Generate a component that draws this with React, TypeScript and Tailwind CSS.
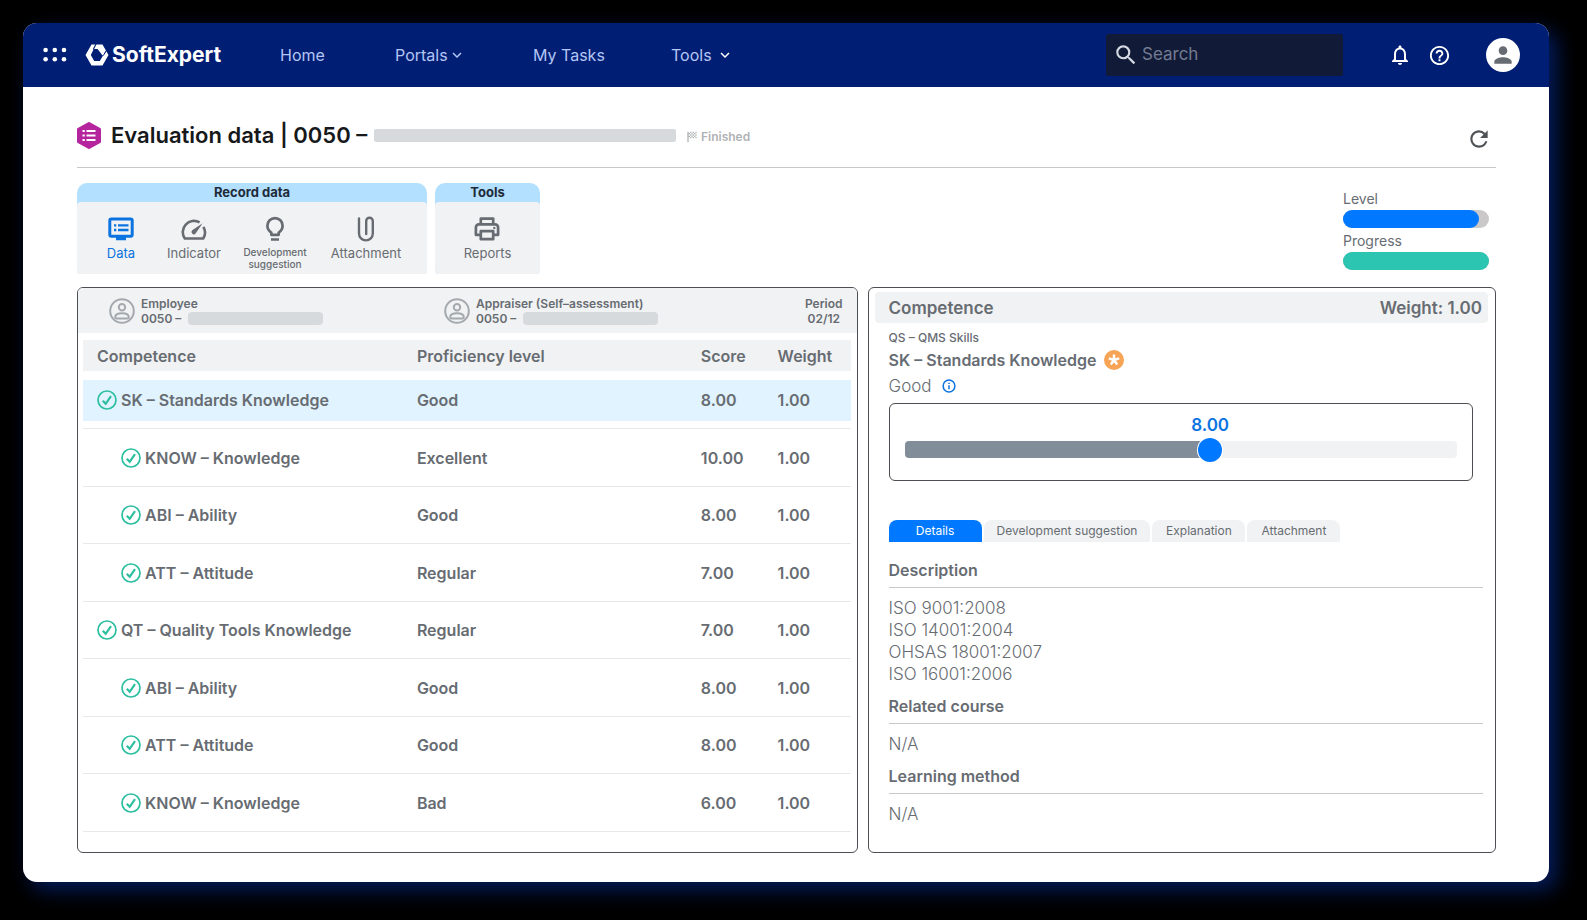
import React, { useState } from 'react';
import {
  MdHelpOutline,
  MdKeyboardArrowDown,
  MdNotificationsNone,
  MdPerson,
  MdRefresh,
  MdSearch,
  MdSportsScore,
} from 'react-icons/md';

const competences = [
  { name: 'SK – Standards Knowledge', level: 'Good', score: '8.00', weight: '1.00', child: false, selected: true },
  { name: 'KNOW – Knowledge', level: 'Excellent', score: '10.00', weight: '1.00', child: true },
  { name: 'ABI – Ability', level: 'Good', score: '8.00', weight: '1.00', child: true },
  { name: 'ATT – Attitude', level: 'Regular', score: '7.00', weight: '1.00', child: true },
  { name: 'QT – Quality Tools Knowledge', level: 'Regular', score: '7.00', weight: '1.00', child: false },
  { name: 'ABI – Ability', level: 'Good', score: '8.00', weight: '1.00', child: true },
  { name: 'ATT – Attitude', level: 'Good', score: '8.00', weight: '1.00', child: true },
  { name: 'KNOW – Knowledge', level: 'Bad', score: '6.00', weight: '1.00', child: true },
];

const tabs = ['Details', 'Development suggestion', 'Explanation', 'Attachment'];

const AppsIcon = () => (
  <svg width="24" height="16" viewBox="0 0 24 16" fill="currentColor" aria-hidden="true">
    {[2.6, 11.8, 21].map((x) => (
      <g key={x}>
        <circle cx={x} cy="3" r="2.3" />
        <circle cx={x} cy="12.2" r="2.3" />
      </g>
    ))}
  </svg>
);

const LogoMark = () => (
  <svg width="24" height="22" viewBox="0 0 24 22" aria-hidden="true">
    <path
      d="M6.500 0.500h11L23.500 11l-6 10.500h-11L0.500 11z M8.800 5L5.800 11l3.400 6h5.600L18.400 11l-3.400-6z"
      fill="#fff"
      fillRule="evenodd"
    />
    <path d="M11 0L8.300 5.500M21.800 6l-3.600 5.500" stroke="#001f74" strokeWidth="1.100" fill="none" />
    <path d="M12.200 4.500h3.800l3 5.300-1.500 1.600z" fill="#fff" />
  </svg>
);

const EvaluationIcon = () => (
  <svg width="24" height="27" viewBox="0 0 24 27" aria-hidden="true">
    <path d="M12 1.500L22.500 7.300v12.400L12 25.500 1.500 19.700V7.300z" fill="#b5259d" stroke="#b5259d" strokeWidth="3" strokeLinejoin="round" />
    <path d="M9.500 9h9M9.500 13.500h9M9.500 18h9M5.500 9h2.300M5.500 13.500h2.300M5.500 18h2.300" stroke="#fff" strokeWidth="2.200" />
  </svg>
);

const DataIcon = () => (
  <svg width="26" height="26" viewBox="0 0 26 26" fill="none" stroke="currentColor" aria-hidden="true">
    <rect x="1.800" y="3" width="22.400" height="17.200" rx="1.500" strokeWidth="3" />
    <path d="M8 22.500h10" strokeWidth="3.600" />
    <path d="M6 9.300h2.300M10 9.300h10.500M6 14h2.300M10 14h10.500" strokeWidth="2.300" />
  </svg>
);

const GaugeIcon = () => (
  <svg width="26" height="26" viewBox="0 0 26 26" fill="none" stroke="currentColor" strokeWidth="2.600" strokeLinejoin="round" aria-hidden="true">
    <path d="M18.600 6.400A11.200 11.200 0 0 0 3.800 22.500h18.400a11.200 11.200 0 0 0 .2-11.700" />
    <path d="M21.600 7.200l-7 10.400a2.200 2.200 0 0 1-3.400-3.300z" fill="currentColor" stroke="none" />
  </svg>
);

const BulbIcon = () => (
  <svg width="26" height="26" viewBox="0 0 26 26" fill="none" stroke="currentColor" strokeWidth="2.700" aria-hidden="true">
    <path d="M9.300 18.800v-2.200C7 15 5.400 12.700 5.400 9.700a7.600 7.600 0 0 1 15.200 0c0 3-1.600 5.300-3.900 6.900v2.200z" strokeLinejoin="round" />
    <path d="M9 23.500h8" />
  </svg>
);

const ClipIcon = () => (
  <svg width="26" height="26" viewBox="0 0 26 26" fill="none" stroke="currentColor" strokeWidth="2.400" strokeLinecap="round" aria-hidden="true">
    <path d="M6 2.500v15a6.900 6.900 0 0 0 13.800 0V5a3.300 3.300 0 0 0-6.600 0v13" />
  </svg>
);

const PrinterIcon = () => (
  <svg width="26" height="26" viewBox="0 0 26 26" fill="none" stroke="currentColor" strokeWidth="2.700" strokeLinejoin="round" aria-hidden="true">
    <path d="M6.800 8.300V2.700h12.400v5.600" />
    <path d="M6.800 18.800H1.900v-7.500a3 3 0 0 1 3-3h16.200a3 3 0 0 1 3 3v7.500h-4.900" />
    <path d="M6.800 15.200h12.400v8H6.800z" />
    <circle cx="20.300" cy="12" r="0.500" strokeWidth="1.400" />
  </svg>
);

const UserCircle = () => (
  <svg width="26" height="26" viewBox="0 0 26 26" fill="none" stroke="#a3a9ae" strokeWidth="2" className="shrink-0" aria-hidden="true">
    <circle cx="13" cy="13" r="11.800" />
    <circle cx="13" cy="9.300" r="3.200" />
    <path d="M6.200 19.200c0-2.500 3-4 6.800-4s6.800 1.500 6.800 4c0 .8-.6 1.200-1.300 1.200h-11c-.7 0-1.300-.4-1.300-1.200z" />
  </svg>
);

const CheckIcon = () => (
  <svg width="20" height="20" viewBox="0 0 20 20" fill="none" stroke="#2bbfa0" strokeWidth="1.700" className="shrink-0" aria-hidden="true">
    <circle cx="10" cy="10" r="9" />
    <path d="M5.800 10.800l2.900 3L14 6.200" strokeWidth="2.200" />
  </svg>
);

const StarBadge = () => (
  <svg width="20" height="20" viewBox="0 0 20 20" aria-hidden="true">
    <circle cx="10" cy="10" r="10" fill="#f7a456" />
    <path d="M10 10V4.500M10 10l5.200-1.700M10 10l3.200 4.500M10 10l-3.200 4.500M10 10L4.800 8.300" stroke="#fff" strokeWidth="2.400" />
  </svg>
);

const InfoIcon = () => (
  <svg width="14" height="14" viewBox="0 0 14 14" fill="none" stroke="#0b74e0" strokeWidth="1.500" aria-hidden="true">
    <circle cx="7" cy="7" r="5.900" />
    <path d="M7 6.200v4M7 3.700v1.400" />
  </svg>
);

const ToolButton = ({ icon, label, active = false, small = false }: { icon: React.ReactNode; label: string; active?: boolean; small?: boolean }) => (
  <button
    className={`flex flex-col items-center ${active ? 'text-[#0b74e0]' : 'text-[#676c72]'} ${small ? 'px-2 text-[10px] leading-3 font-medium' : 'text-[13px] leading-5'}`}
  >
    {icon}
    <span className={small ? 'mt-1' : 'mt-px'}>{label}</span>
  </button>
);

const Person = ({ role }: { role: string }) => (
  <div className="flex items-center gap-[6px]">
    <UserCircle />
    <div>
      <div>{role}</div>
      <div className="flex items-center gap-1">
        <span className="w-[43px] whitespace-nowrap">0050 –</span>
        <span className="h-[13px] w-[135px] rounded-sm bg-[#d7dadc]" />
      </div>
    </div>
  </div>
);

const Meter = ({ label, value, color }: { label: string; value: number; color: string }) => (
  <div>
    <div className="text-[14px] leading-[22px] text-[#676c72]">{label}</div>
    <div className="h-[18px] rounded-full bg-[#cac8c9]" role="progressbar" aria-label={label} aria-valuenow={value}>
      <div className={`h-full rounded-full ${color}`} style={{ width: `${value}%` }} />
    </div>
  </div>
);

const Section = ({ title, lines }: { title: string; lines: string[] }) => (
  <section className="mb-2">
    <h3 className="border-b border-[#c6c8ca] pb-[3px] text-[16px] leading-[27px] font-semibold">{title}</h3>
    <div className="pt-[9px] text-[17px] leading-[22px] font-light">
      {lines.map((line) => (
        <p key={line}>{line}</p>
      ))}
    </div>
  </section>
);

const App = () => {
  const [activeTab, setActiveTab] = useState('Details');
  const [score, setScore] = useState(8);
  const ratio = (score - 3) / 9;
  const thumb = `calc(12px + (100% - 24px) * ${ratio})`;

  return (
    <div className="flex min-h-screen bg-black pt-[23px] pr-[38px] pb-[38px] pl-[23px] font-['Inter','Liberation_Sans',sans-serif] text-[#676c72]">
      <div className="flex flex-1 flex-col overflow-hidden rounded-[14px] bg-white shadow-[8px_8px_20px_#041c5c]">
        <header className="flex h-16 items-center bg-[#001f74] pr-[29px] pl-5 text-white">
          <button aria-label="Applications">
            <AppsIcon />
          </button>
          <a href="#" className="ml-[18px] flex w-[195px] items-center gap-[3px] text-[21px] leading-6 font-bold">
            <LogoMark />
            SoftExpert
          </a>
          <nav className="flex items-center text-[16px] text-[#b4c6f4]">
            <a href="#" className="w-[115px]">Home</a>
            <button className="flex w-[138px] items-center">
              Portals
              <MdKeyboardArrowDown size={18} />
            </button>
            <a href="#" className="w-[138px]">My Tasks</a>
            <button className="flex items-center gap-1">
              Tools
              <MdKeyboardArrowDown size={18} className="text-white" />
            </button>
          </nav>
          <label className="ml-auto flex h-[42px] w-[237px] items-center gap-[3px] rounded-xs bg-[#111a36] pl-[7px]">
            <MdSearch size={26} className="shrink-0 text-[#d5d9e4]" />
            <input type="search" placeholder="Search" aria-label="Search" className="w-full min-w-0 bg-transparent text-[17px] outline-none placeholder:text-[#747b92]" />
          </label>
          <div className="ml-[45px] flex items-center">
            <button aria-label="Notifications">
              <MdNotificationsNone size={24} />
            </button>
            <button aria-label="Help" className="ml-4">
              <MdHelpOutline size={23} />
            </button>
            <button aria-label="Profile" className="ml-[35px] flex h-[34px] w-[34px] items-center justify-center rounded-full bg-white text-[#676c72]">
              <MdPerson size={26} />
            </button>
          </div>
        </header>

        <main className="flex flex-1 flex-col pr-[53px] pb-[29px] pl-[54px]">
          <div className="flex h-[81px] items-center border-b border-[#c6c8ca] pt-4">
            <EvaluationIcon />
            <h1 className="ml-[10px] w-[256px] text-[22px] leading-7 font-semibold whitespace-nowrap text-[#16181a]">Evaluation data | 0050 –</h1>
            <span className="ml-[7px] h-[13px] w-[302px] rounded-xs bg-[#d7dadc]" />
            <span className="mt-1 ml-2 flex items-center gap-px text-[12px] leading-4 font-semibold text-[#b0b3b5]">
              <MdSportsScore size={16} />
              Finished
            </span>
            <button aria-label="Refresh" className="mt-2 mr-1 ml-auto text-[#505356]">
              <MdRefresh size={26} />
            </button>
          </div>

          <div className="mt-[15px] flex items-start">
            <section className="w-[350px] rounded-t-[10px] rounded-b-sm bg-[#b3e0ff]">
              <h2 className="text-center text-[13px] leading-[19px] font-bold text-[#1e2b38]">Record data</h2>
              <div className="grid h-[72px] grid-cols-[72px_74px_88px_94px] items-start rounded-sm bg-[#f1f2f3] pt-[14px] pl-2">
                <ToolButton icon={<DataIcon />} label="Data" active />
                <ToolButton icon={<GaugeIcon />} label="Indicator" />
                <ToolButton icon={<BulbIcon />} label="Development suggestion" small />
                <ToolButton icon={<ClipIcon />} label="Attachment" />
              </div>
            </section>
            <section className="ml-2 w-[105px] rounded-t-[10px] rounded-b-sm bg-[#b3e0ff]">
              <h2 className="text-center text-[13px] leading-[19px] font-bold text-[#1e2b38]">Tools</h2>
              <div className="flex h-[72px] items-start justify-center rounded-sm bg-[#f1f2f3] pt-[14px]">
                <ToolButton icon={<PrinterIcon />} label="Reports" />
              </div>
            </section>
            <div className="mt-[5px] mr-[7px] ml-auto flex w-[146px] flex-col gap-[2px]">
              <Meter label="Level" value={93} color="bg-[#0078ff]" />
              <Meter label="Progress" value={100} color="bg-[#2cc5b1]" />
            </div>
          </div>

          <div className="mt-[13px] grid flex-1 grid-cols-[780fr_628fr] gap-[10px]">
            <section className="overflow-hidden rounded-md border border-[#4b4e52]">
              <div className="flex h-[45px] items-center bg-[#f1f2f3] pr-[14px] pl-[31px] text-[12px] leading-[15px] font-semibold">
                <div className="w-[335px]">
                  <Person role="Employee" />
                </div>
                <Person role="Appraiser (Self–assessment)" />
                <div className="ml-auto text-center">
                  <div>Period</div>
                  <div>02/12</div>
                </div>
              </div>
              <div className="pt-[7px] pr-[6px] pl-[5px]">
                <table className="w-full table-fixed border-separate border-spacing-0 text-left text-[16px] leading-6">
                  <thead>
                    <tr className="h-8 bg-[#f1f2f3] [&>th]:border-b [&>th]:border-white [&>th]:font-semibold">
                      <th className="w-[43.5%] pl-[14px]">Competence</th>
                      <th className="w-[37%]">Proficiency level</th>
                      <th className="w-[10%]">Score</th>
                      <th>Weight</th>
                    </tr>
                  </thead>
                  <tbody>
                    {competences.map((item, i) => {
                      const cell = `flex h-[41px] items-center ${item.selected ? 'bg-[#e0f3fe]' : ''}`;
                      return (
                        <tr key={i} className="h-[57px] font-semibold even:h-[58px] [&>td]:border-b [&>td]:border-[#e6e8e9]">
                          <td>
                            <div className={`${cell} gap-1 ${item.child ? 'pl-[38px]' : 'pl-[14px]'}`}>
                              <CheckIcon />
                              {item.name}
                            </div>
                          </td>
                          <td><div className={cell}>{item.level}</div></td>
                          <td><div className={cell}>{item.score}</div></td>
                          <td><div className={cell}>{item.weight}</div></td>
                        </tr>
                      );
                    })}
                  </tbody>
                </table>
              </div>
            </section>

            <section className="rounded-md border border-[#4b4e52] pt-1 pr-[7px] pl-[6px]">
              <div className="flex h-[31px] items-center justify-between rounded-sm bg-[#f1f2f3] pr-[6px] pl-[14px] text-[17px] leading-6 font-semibold">
                <h2>Competence</h2>
                <span>Weight: 1.00</span>
              </div>
              <div className="pr-[5px] pl-[14px]">
                <p className="mt-[7px] text-[12px] leading-4 font-medium">QS – QMS Skills</p>
                <h3 className="flex items-center gap-2 text-[16px] leading-7 font-semibold">
                  SK – Standards Knowledge
                  <StarBadge />
                </h3>
                <p className="flex items-center gap-[10px] text-[17px] leading-6 font-light">
                  Good
                  <InfoIcon />
                </p>
                <div className="mt-[5px] mr-[10px] h-[78px] rounded-md border border-[#4b4e52] px-[15px] pt-[9px]">
                  <output
                    htmlFor="score"
                    className="block w-fit -translate-x-1/2 text-[17px] leading-6 font-semibold text-[#0b74e0]"
                    style={{ marginLeft: thumb }}
                  >
                    {score.toFixed(2)}
                  </output>
                  <input
                    id="score"
                    type="range"
                    aria-label="Score"
                    min={3}
                    max={12}
                    value={score}
                    onChange={(e) => setScore(Number(e.target.value))}
                    className="mt-1 block h-[17px] w-full appearance-none rounded-sm [&::-webkit-slider-thumb]:h-6 [&::-webkit-slider-thumb]:w-6 [&::-webkit-slider-thumb]:appearance-none [&::-webkit-slider-thumb]:rounded-full [&::-webkit-slider-thumb]:bg-[#0078ff] [&::-webkit-slider-thumb]:shadow-[0_0_0_1px_#fff]"
                    style={{ background: `linear-gradient(to right, #828d9a ${thumb}, #f1f2f3 ${thumb})` }}
                  />
                </div>

                <div className="mt-[39px] flex gap-[2px]" role="tablist">
                  {tabs.map((tab) => (
                    <button
                      key={tab}
                      role="tab"
                      aria-selected={tab === activeTab}
                      onClick={() => setActiveTab(tab)}
                      className={`h-[22px] min-w-[93px] rounded-t-lg px-[13px] text-[12px] leading-4 ${tab === activeTab ? 'bg-[#0078ff] text-white' : 'bg-[#f1f2f3]'}`}
                    >
                      {tab}
                    </button>
                  ))}
                </div>

                <div className="mt-[15px]">
                  <Section title="Description" lines={['ISO 9001:2008', 'ISO 14001:2004', 'OHSAS 18001:2007', 'ISO 16001:2006']} />
                  <Section title="Related course" lines={['N/A']} />
                  <Section title="Learning method" lines={['N/A']} />
                </div>
              </div>
            </section>
          </div>
        </main>
      </div>
    </div>
  );
};

export default App;
